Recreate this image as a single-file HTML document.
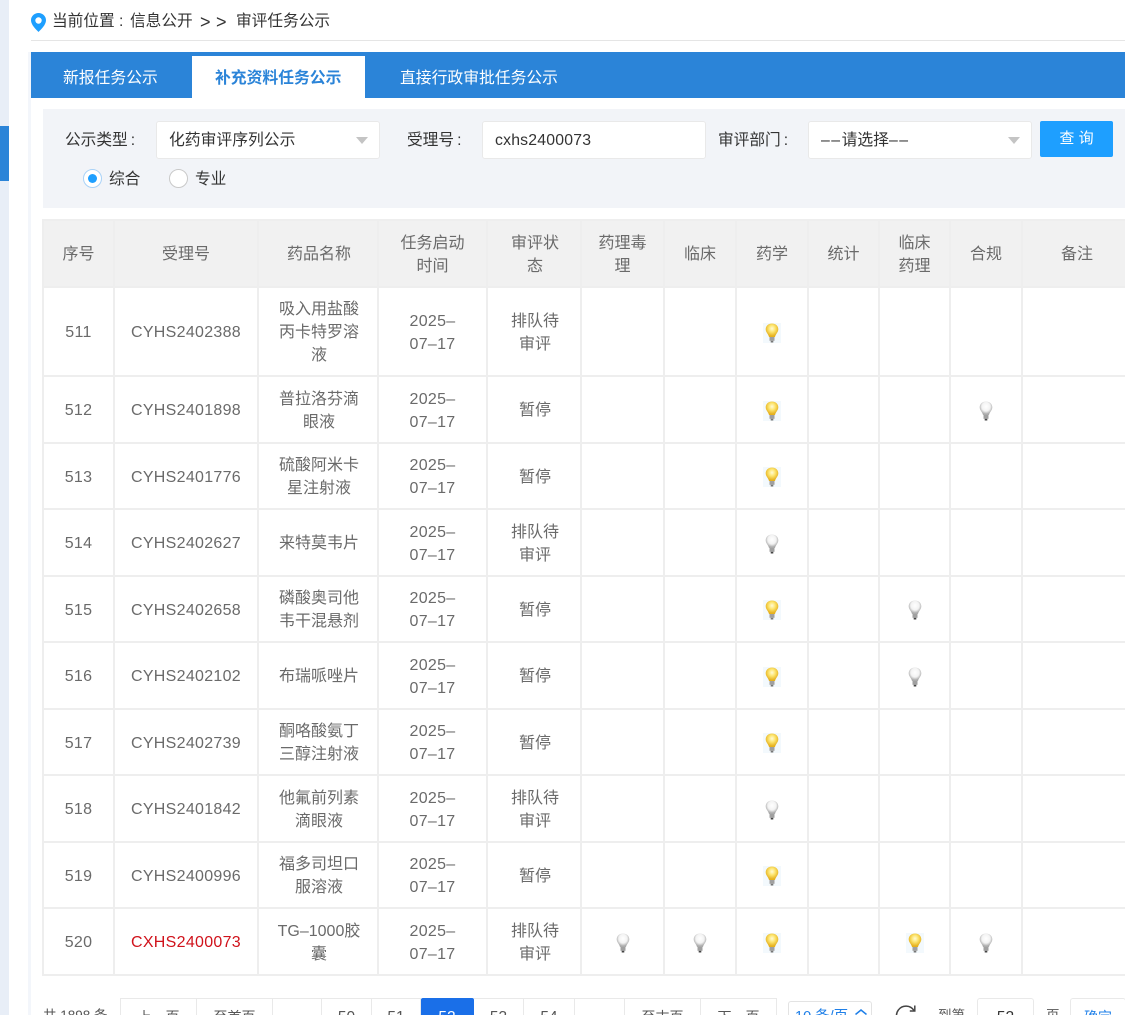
<!DOCTYPE html>
<html lang="zh-CN"><head><meta charset="utf-8"><title>审评任务公示</title>
<style>
*{box-sizing:border-box}
html,body{margin:0;padding:0;background:#fff;width:1125px;height:1015px;overflow:hidden}
#w0{position:relative;width:1125px;height:1015px;overflow:hidden;font-family:"Liberation Sans","Noto Sans CJK SC",sans-serif;font-size:15.8px;color:#333}
.a{position:absolute;white-space:nowrap}
table{position:absolute;left:42px;top:219px;width:1089px;table-layout:fixed;border-collapse:separate;border-spacing:0;border-top:2px solid #eeeeee;border-left:2px solid #eeeeee}
td,th{border-right:2px solid #eeeeee;border-bottom:2px solid #eeeeee;text-align:center;vertical-align:middle;padding:2px 0 0;font-weight:400;font-size:16px;line-height:23px;color:#6a6a6a}
th{background:#f1f1f1}
td.n{letter-spacing:.3px}
td:nth-child(3),th:nth-child(3),td:nth-child(5),th:nth-child(5){padding-left:2px}
svg.b{display:block;margin:0 auto;position:relative;top:0}
.p{position:absolute;top:998px;height:40px;border:1px solid #e9e9e9;border-left:0;text-align:center;line-height:37px;font-size:14px;color:#555}
.p.d{font-size:15.5px}
.c{margin-left:3px}
.s{letter-spacing:1.5px}
</style></head><body><div id="w0">
<svg width="0" height="0" style="position:absolute"><defs>
<radialGradient id="gy" cx=".5" cy=".38" r=".55"><stop offset="0" stop-color="#fffbd8"/><stop offset=".45" stop-color="#fde672"/><stop offset="1" stop-color="#e6b11e"/></radialGradient>
<radialGradient id="gw" cx=".5" cy=".38" r=".55"><stop offset="0" stop-color="#fff"/><stop offset=".6" stop-color="#f3f3f3"/><stop offset="1" stop-color="#ababab"/></radialGradient>
<symbol id="y" viewBox="0 0 18 20"><rect x="0" y="0" width="18" height="20" fill="#f3f9fd"/><path d="M9 .5C5 .5 2.700 3.300 2.700 6.300c0 3.200 2.600 4.700 3.300 7.700h6c.7-3 3.300-4.500 3.300-7.700C15.300 3.300 13 .5 9 .5z" fill="url(#gy)"/><rect x="6.500" y="14" width="5" height="3.800" fill="#a0a0a0"/><rect x="7.700" y="17.800" width="2.600" height="1.700" fill="#777"/></symbol>
<symbol id="w" viewBox="0 0 18 20"><path d="M9 .5C5 .5 2.700 3.300 2.700 6.300c0 3.200 2.600 4.700 3.300 7.700h6c.7-3 3.300-4.500 3.300-7.700C15.300 3.300 13 .5 9 .5z" fill="url(#gw)"/><rect x="6.500" y="14" width="5" height="3.800" fill="#a0a0a0"/><rect x="7.700" y="17.800" width="2.600" height="1.700" fill="#444"/></symbol>
</defs></svg>

<div class="a" style="left:0;top:0;width:9px;height:1015px;background:#e8eef7"></div>
<div class="a" style="left:0;top:126px;width:9px;height:55px;background:#2b84d8"></div>
<div class="a" style="left:28px;top:52px;width:3px;height:963px;background:#f3f6fb"></div>

<svg class="a" style="left:31px;top:13px" width="15" height="19" viewBox="0 0 15 19"><path d="M7.500 0C3.300 0 0 3.200 0 7.300c0 4.600 5 9.200 7.500 11.700C10 16.500 15 11.900 15 7.300 15 3.200 11.700 0 7.500 0z" fill="#1e9fff"/><circle cx="7.500" cy="7.500" r="3.200" fill="#fff"/></svg>
<div class="a" style="left:52px;top:11px;line-height:22px;font-size:15.7px;color:#333">当前位置</div>
<div class="a" style="left:119px;top:11px;line-height:22px;font-size:15.7px;color:#333">:</div>
<div class="a" style="left:130px;top:11px;line-height:22px;font-size:15.7px;color:#333">信息公开</div>
<div class="a" style="left:200px;top:11px;line-height:22px;font-size:18px;color:#333">&gt;</div>
<div class="a" style="left:216px;top:11px;line-height:22px;font-size:18px;color:#333">&gt;</div>
<div class="a" style="left:236px;top:11px;line-height:22px;font-size:15.7px;color:#333">审评任务公示</div>
<div class="a" style="left:31px;top:40px;width:1094px;height:1px;background:#e5e5e5"></div>

<div class="a" style="left:31px;top:52px;width:1094px;height:46px;background:#2b84d8"></div>
<div class="a" style="left:192px;top:56px;width:173px;height:42px;background:#fff"></div>
<div class="a" style="left:63px;top:68px;line-height:22px;color:#fff">新报任务公示</div>
<div class="a" style="left:215px;top:68px;line-height:22px;color:#2b84d8;font-weight:700">补充资料任务公示</div>
<div class="a" style="left:400px;top:68px;line-height:22px;color:#fff">直接行政审批任务公示</div>

<div class="a" style="left:43px;top:109px;width:1082px;height:99px;background:#f2f4f8"></div>
<div class="a" style="left:65px;top:130px;line-height:22px;color:#333;font-size:15.7px">公示类型<span class="c">:</span></div>
<div class="a" style="left:156px;top:121px;width:224px;height:38px;background:#fff;border:1px solid #e9e9e9;border-radius:3px;padding-left:12px;line-height:38px;color:#333">化药审评序列公示</div>
<div class="a" style="left:356px;top:137px;width:0;height:0;border:6px solid transparent;border-top:7px solid #c4c4c4;border-bottom:0"></div>
<div class="a" style="left:407px;top:130px;line-height:22px;font-size:15.7px;color:#333">受理号<span class="c">:</span></div>
<div class="a" style="left:482px;top:121px;width:224px;height:38px;background:#fff;border:1px solid #e9e9e9;border-radius:3px;padding-left:12px;line-height:38px;color:#333;letter-spacing:.2px">cxhs2400073</div>
<div class="a" style="left:718px;top:130px;line-height:22px;font-size:15.7px;color:#333">审评部门<span class="c">:</span></div>
<div class="a" style="left:808px;top:121px;width:224px;height:38px;background:#fff;border:1px solid #e9e9e9;border-radius:3px;padding-left:12px;line-height:38px;color:#333"><span class="s">––</span>请选择<span class="s">––</span></div>
<div class="a" style="left:1008px;top:137px;width:0;height:0;border:6px solid transparent;border-top:7px solid #c4c4c4;border-bottom:0"></div>
<div class="a" style="left:1040px;top:121px;width:73px;height:36px;background:#1e9fff;border-radius:2px;color:#fff;text-align:center;line-height:36px;font-size:15px">查 询</div>

<div class="a" style="left:83px;top:169px;width:19px;height:19px;border:1px solid #a9d2f7;border-radius:50%;background:#fff"></div>
<div class="a" style="left:88px;top:174px;width:9px;height:9px;border-radius:50%;background:#1e9fff"></div>
<div class="a" style="left:109px;top:169px;line-height:22px;color:#333;font-size:15.7px">综合</div>
<div class="a" style="left:169px;top:169px;width:19px;height:19px;border:1px solid #c9c9c9;border-radius:50%;background:#fff"></div>
<div class="a" style="left:195px;top:169px;line-height:22px;color:#333;font-size:15.7px">专业</div>

<table>
<colgroup><col style="width:71px"><col style="width:144px"><col style="width:120px"><col style="width:109px"><col style="width:94px"><col style="width:83px"><col style="width:72px"><col style="width:72px"><col style="width:71px"><col style="width:71px"><col style="width:72px"><col style="width:110px"></colgroup>
<tr style="height:67px"><th>序号</th><th>受理号</th><th>药品名称</th><th>任务启动<br>时间</th><th>审评状<br>态</th><th>药理毒<br>理</th><th>临床</th><th>药学</th><th>统计</th><th>临床<br>药理</th><th>合规</th><th>备注</th></tr>
<tr style="height:89px"><td class="n">511</td><td class="n">CYHS2402388</td><td>吸入用盐酸<br>丙卡特罗溶<br>液</td><td class="n">2025–<br>07–17</td><td>排队待<br>审评</td><td></td><td></td><td><svg class="b" width="18" height="20"><use href="#y"/></svg></td><td></td><td></td><td></td><td></td></tr>
<tr style="height:67px"><td class="n">512</td><td class="n">CYHS2401898</td><td>普拉洛芬滴<br>眼液</td><td class="n">2025–<br>07–17</td><td>暂停</td><td></td><td></td><td><svg class="b" width="18" height="20"><use href="#y"/></svg></td><td></td><td></td><td><svg class="b" width="18" height="20"><use href="#w"/></svg></td><td></td></tr>
<tr style="height:66px"><td class="n">513</td><td class="n">CYHS2401776</td><td>硫酸阿米卡<br>星注射液</td><td class="n">2025–<br>07–17</td><td>暂停</td><td></td><td></td><td><svg class="b" width="18" height="20"><use href="#y"/></svg></td><td></td><td></td><td></td><td></td></tr>
<tr style="height:67px"><td class="n">514</td><td class="n">CYHS2402627</td><td>来特莫韦片</td><td class="n">2025–<br>07–17</td><td>排队待<br>审评</td><td></td><td></td><td><svg class="b" width="18" height="20"><use href="#w"/></svg></td><td></td><td></td><td></td><td></td></tr>
<tr style="height:66px"><td class="n">515</td><td class="n">CYHS2402658</td><td>磷酸奥司他<br>韦干混悬剂</td><td class="n">2025–<br>07–17</td><td>暂停</td><td></td><td></td><td><svg class="b" width="18" height="20"><use href="#y"/></svg></td><td></td><td><svg class="b" width="18" height="20"><use href="#w"/></svg></td><td></td><td></td></tr>
<tr style="height:67px"><td class="n">516</td><td class="n">CYHS2402102</td><td>布瑞哌唑片</td><td class="n">2025–<br>07–17</td><td>暂停</td><td></td><td></td><td><svg class="b" width="18" height="20"><use href="#y"/></svg></td><td></td><td><svg class="b" width="18" height="20"><use href="#w"/></svg></td><td></td><td></td></tr>
<tr style="height:66px"><td class="n">517</td><td class="n">CYHS2402739</td><td>酮咯酸氨丁<br>三醇注射液</td><td class="n">2025–<br>07–17</td><td>暂停</td><td></td><td></td><td><svg class="b" width="18" height="20"><use href="#y"/></svg></td><td></td><td></td><td></td><td></td></tr>
<tr style="height:67px"><td class="n">518</td><td class="n">CYHS2401842</td><td>他氟前列素<br>滴眼液</td><td class="n">2025–<br>07–17</td><td>排队待<br>审评</td><td></td><td></td><td><svg class="b" width="18" height="20"><use href="#w"/></svg></td><td></td><td></td><td></td><td></td></tr>
<tr style="height:66px"><td class="n">519</td><td class="n">CYHS2400996</td><td>福多司坦口<br>服溶液</td><td class="n">2025–<br>07–17</td><td>暂停</td><td></td><td></td><td><svg class="b" width="18" height="20"><use href="#y"/></svg></td><td></td><td></td><td></td><td></td></tr>
<tr style="height:67px"><td class="n">520</td><td class="n" style="color:#d0121b">CXHS2400073</td><td>TG–1000胶<br>囊</td><td class="n">2025–<br>07–17</td><td>排队待<br>审评</td><td><svg class="b" width="18" height="20"><use href="#w"/></svg></td><td><svg class="b" width="18" height="20"><use href="#w"/></svg></td><td><svg class="b" width="18" height="20"><use href="#y"/></svg></td><td></td><td><svg class="b" width="18" height="20"><use href="#y"/></svg></td><td><svg class="b" width="18" height="20"><use href="#w"/></svg></td><td></td></tr>
</table>

<div class="a" style="left:43px;top:1006px;line-height:20px;font-size:13.5px;color:#555">共 1898 条</div>
<div class="p" style="left:120px;width:77px;border-left:1px solid #e9e9e9">上一页</div>
<div class="p" style="left:197px;width:76px">至首页</div>
<div class="p" style="left:273px;width:49px"></div>
<div class="p d" style="left:322px;width:50px">50</div>
<div class="p d" style="left:372px;width:49px">51</div>
<div class="p d" style="left:421px;width:53px;background:#1a6fe8;border-color:#1a6fe8;color:#fff;border-radius:2px 2px 0 0">52</div>
<div class="p d" style="left:474px;width:50px">53</div>
<div class="p d" style="left:524px;width:51px">54</div>
<div class="p" style="left:575px;width:50px"></div>
<div class="p" style="left:625px;width:76px">至末页</div>
<div class="p" style="left:701px;width:76px">下一页</div>
<div class="p" style="left:788px;top:1001px;width:84px;border:1px solid #e3e3e3;border-radius:3px;color:#1e7fe8;text-align:left;padding-left:6px;line-height:31px;font-size:14.5px">10 条/页</div>
<svg class="a" style="left:854px;top:1008px" width="14" height="8" viewBox="0 0 14 8"><path d="M1.500 6.500 7 2l5.500 4.500" fill="none" stroke="#1e7fe8" stroke-width="1.500"/></svg>
<svg class="a" style="left:895px;top:1004px" width="22" height="22" viewBox="0 0 22 22"><path d="M19 6.500A9.500 9.500 0 1 0 20.500 11" fill="none" stroke="#444" stroke-width="1.500"/><path d="M19.800 1.500V7h-5" fill="none" stroke="#444" stroke-width="1.500"/></svg>
<div class="a" style="left:938px;top:1006px;line-height:20px;font-size:13.5px;color:#555">到第</div>
<div class="p d" style="left:977px;width:57px;border-left:1px solid #e9e9e9;border-radius:3px;color:#333">52</div>
<div class="a" style="left:1046px;top:1006px;line-height:20px;font-size:13.5px;color:#555">页</div>
<div class="p" style="left:1070px;width:56px;border-left:1px solid #e9e9e9;border-radius:3px;color:#1e7fe8">确定</div>
</div></body></html>
